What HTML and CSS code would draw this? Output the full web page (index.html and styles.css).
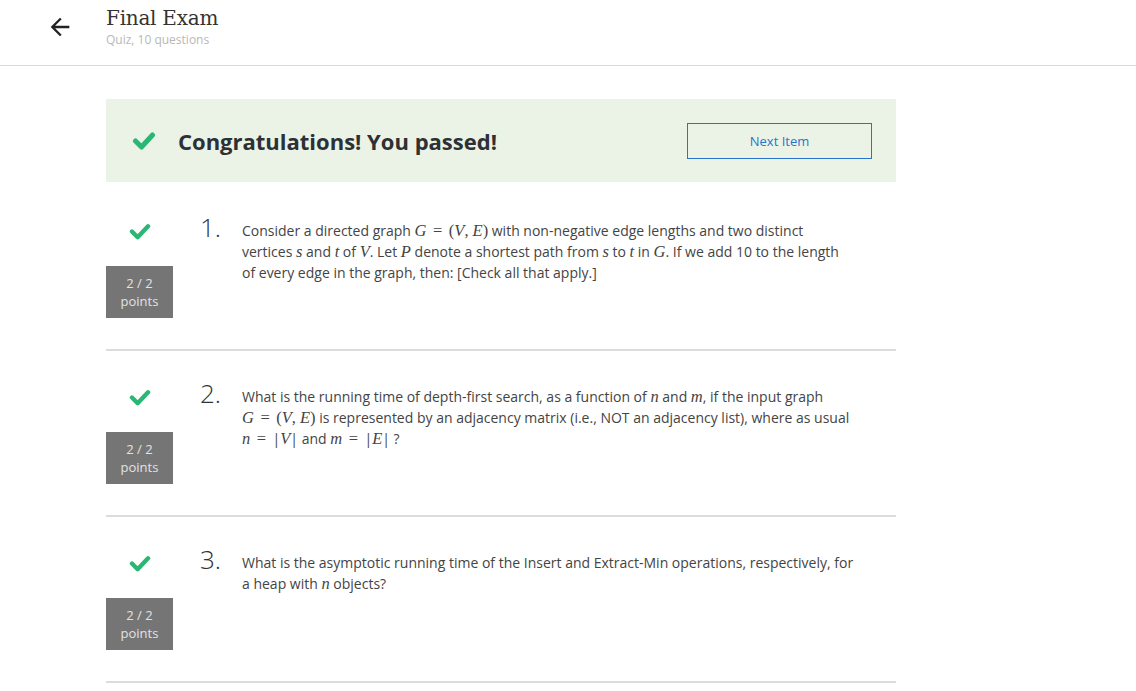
FILE: index.html
```html
<!DOCTYPE html>
<html lang="en">
<head>
<meta charset="utf-8">
<title>Final Exam</title>
<link rel="stylesheet" href="styles.css">
</head>
<body>
<header class="topbar">
  <a class="back" href="#" aria-label="Back">
    <svg width="28" height="28" viewBox="0 0 24 24"><path d="M20 11H7.830l5.59-5.59L12 4l-8 8 8 8 1.41-1.41L7.83 13H20v-2z" fill="#222"/></svg>
  </a>
  <div class="titles">
    <h1 class="title">Final Exam</h1>
    <div class="subtitle">Quiz, 10 questions</div>
  </div>
</header>

<main class="content">
  <section class="banner">
    <svg class="banner-check" width="24" height="20" viewBox="0 0 24 20"><polyline points="3.5,10 9.5,16 20.5,4" fill="none" stroke="#2bb673" stroke-width="5" stroke-linecap="round" stroke-linejoin="round"/></svg>
    <h2 class="banner-text">Congratulations! You passed!</h2>
    <button class="next-btn">Next Item</button>
  </section>

  <section class="question">
    <div class="q-side">
      <svg class="q-check" width="24" height="18" viewBox="0 0 24 18"><polyline points="3.5,9 9.5,15 20.5,3.5" fill="none" stroke="#2bb673" stroke-width="4.6" stroke-linecap="round" stroke-linejoin="round"/></svg>
      <div class="points">2 / 2<br>points</div>
    </div>
    <div class="q-body">
      <div class="q-num">1.</div>
      <p class="q-text">Consider a directed graph <span class="m"><i>G</i><span class="eq">=</span>(<i>V</i>,<span class="sp"></span><i>E</i>)</span> with non-negative edge lengths and two distinct vertices <span class="m"><i>s</i></span> and <span class="m"><i>t</i></span> of <span class="m"><i>V</i></span>. Let <span class="m"><i>P</i></span> denote a shortest path from <span class="m"><i>s</i></span> to <span class="m"><i>t</i></span> in <span class="m"><i>G</i></span>. If we add 10 to the length of every edge in the graph, then: [Check all that apply.]</p>
    </div>
  </section>

  <section class="question">
    <div class="q-side">
      <svg class="q-check" width="24" height="18" viewBox="0 0 24 18"><polyline points="3.5,9 9.5,15 20.5,3.5" fill="none" stroke="#2bb673" stroke-width="4.6" stroke-linecap="round" stroke-linejoin="round"/></svg>
      <div class="points">2 / 2<br>points</div>
    </div>
    <div class="q-body">
      <div class="q-num">2.</div>
      <p class="q-text">What is the running time of depth-first search, as a function of <span class="m"><i>n</i></span> and <span class="m"><i>m</i></span>, if the input graph <span class="m"><i>G</i><span class="eq">=</span>(<i>V</i>,<span class="sp"></span><i>E</i>)</span> is represented by an adjacency matrix (i.e., NOT an adjacency list), where as usual <span class="m"><i>n</i><span class="eq">=</span></span>|<span class="m"><i>V</i></span>| and <span class="m"><i>m</i><span class="eq">=</span></span>|<span class="m"><i>E</i></span>|&nbsp;?</p>
    </div>
  </section>

  <section class="question">
    <div class="q-side">
      <svg class="q-check" width="24" height="18" viewBox="0 0 24 18"><polyline points="3.5,9 9.5,15 20.5,3.5" fill="none" stroke="#2bb673" stroke-width="4.6" stroke-linecap="round" stroke-linejoin="round"/></svg>
      <div class="points">2 / 2<br>points</div>
    </div>
    <div class="q-body">
      <div class="q-num">3.</div>
      <p class="q-text">What is the asymptotic running time of the Insert and Extract-Min operations, respectively, for a heap with <span class="m"><i>n</i></span> objects?</p>
    </div>
  </section>
</main>
</body>
</html>
```

FILE: styles.css
```css
html, body {
  margin: 0;
  padding: 0;
  background: #fff;
}

body {
  font-family: "Open Sans", "Noto Sans", sans-serif;
  color: #3d3d3d;
}

.topbar {
  display: flex;
  align-items: flex-start;
  height: 66px;
  box-sizing: border-box;
  padding: 6px 0 0 46px;
  border-bottom: 1px solid #d9d9d9;
}

.back {
  display: block;
  width: 28px;
  height: 28px;
  margin-top: 7px;
  margin-right: 32px;
}

.back svg {
  display: block;
}

.title {
  margin: 0;
  font-family: "DejaVu Serif", "Liberation Serif", serif;
  font-weight: 400;
  font-size: 20px;
  line-height: 24px;
  color: #333;
  letter-spacing: -0.25px;
}

.subtitle {
  font-size: 12px;
  line-height: 16px;
  margin-top: 2px;
  color: #b8b8b8;
}

.content {
  width: 790px;
  margin: 33px 0 0 106px;
}

.banner {
  display: flex;
  align-items: center;
  height: 83px;
  box-sizing: border-box;
  padding: 0 24px 0 26px;
  background: #ebf3e6;
  margin-bottom: 3px;
}

.banner-check {
  display: block;
  margin-right: 22px;
  margin-top: 1px;
}

.banner-text {
  flex: 1;
  margin: 0;
  font-size: 22px;
  font-weight: 700;
  color: #2d3034;
  line-height: 30px;
  padding-top: 1px;
}

.next-btn {
  width: 185px;
  height: 36px;
  border: 1px solid #2a73cc;
  background: transparent;
  color: #2a73cc;
  font-family: "Open Sans", "Noto Sans", sans-serif;
  font-size: 13px;
  padding: 0;
}

.question {
  display: flex;
  padding: 38px 0 31px;
  border-bottom: 2px solid #dcdcdc;
}

.q-side {
  width: 67px;
  display: flex;
  flex-direction: column;
  align-items: center;
}

.q-check {
  display: block;
  margin-bottom: 26px;
  height: 17px;
}

.points {
  width: 67px;
  height: 52px;
  box-sizing: border-box;
  padding-top: 8px;
  background: #757575;
  color: #e2e2e2;
  font-size: 13px;
  line-height: 18px;
  text-align: center;
}

.q-body {
  display: flex;
  align-items: baseline;
  margin-left: 27px;
  margin-top: -9px;
}

.q-num {
  width: 42px;
  flex: none;
  font-size: 26px;
  font-weight: 300;
  color: #333;
  line-height: 24px;
  position: relative;
  top: 1px;
}

.q-text {
  margin: 0;
  width: 612px;
  font-size: 14px;
  line-height: 21px;
  color: #444;
}

.m {
  font-family: "Liberation Serif", "DejaVu Serif", serif;
  font-size: 16.5px;
  line-height: 1;
  white-space: nowrap;
}

.m i {
  font-style: italic;
}

.eq {
  margin: 0 6.5px;
}

.sp {
  display: inline-block;
  width: 4px;
}
```
